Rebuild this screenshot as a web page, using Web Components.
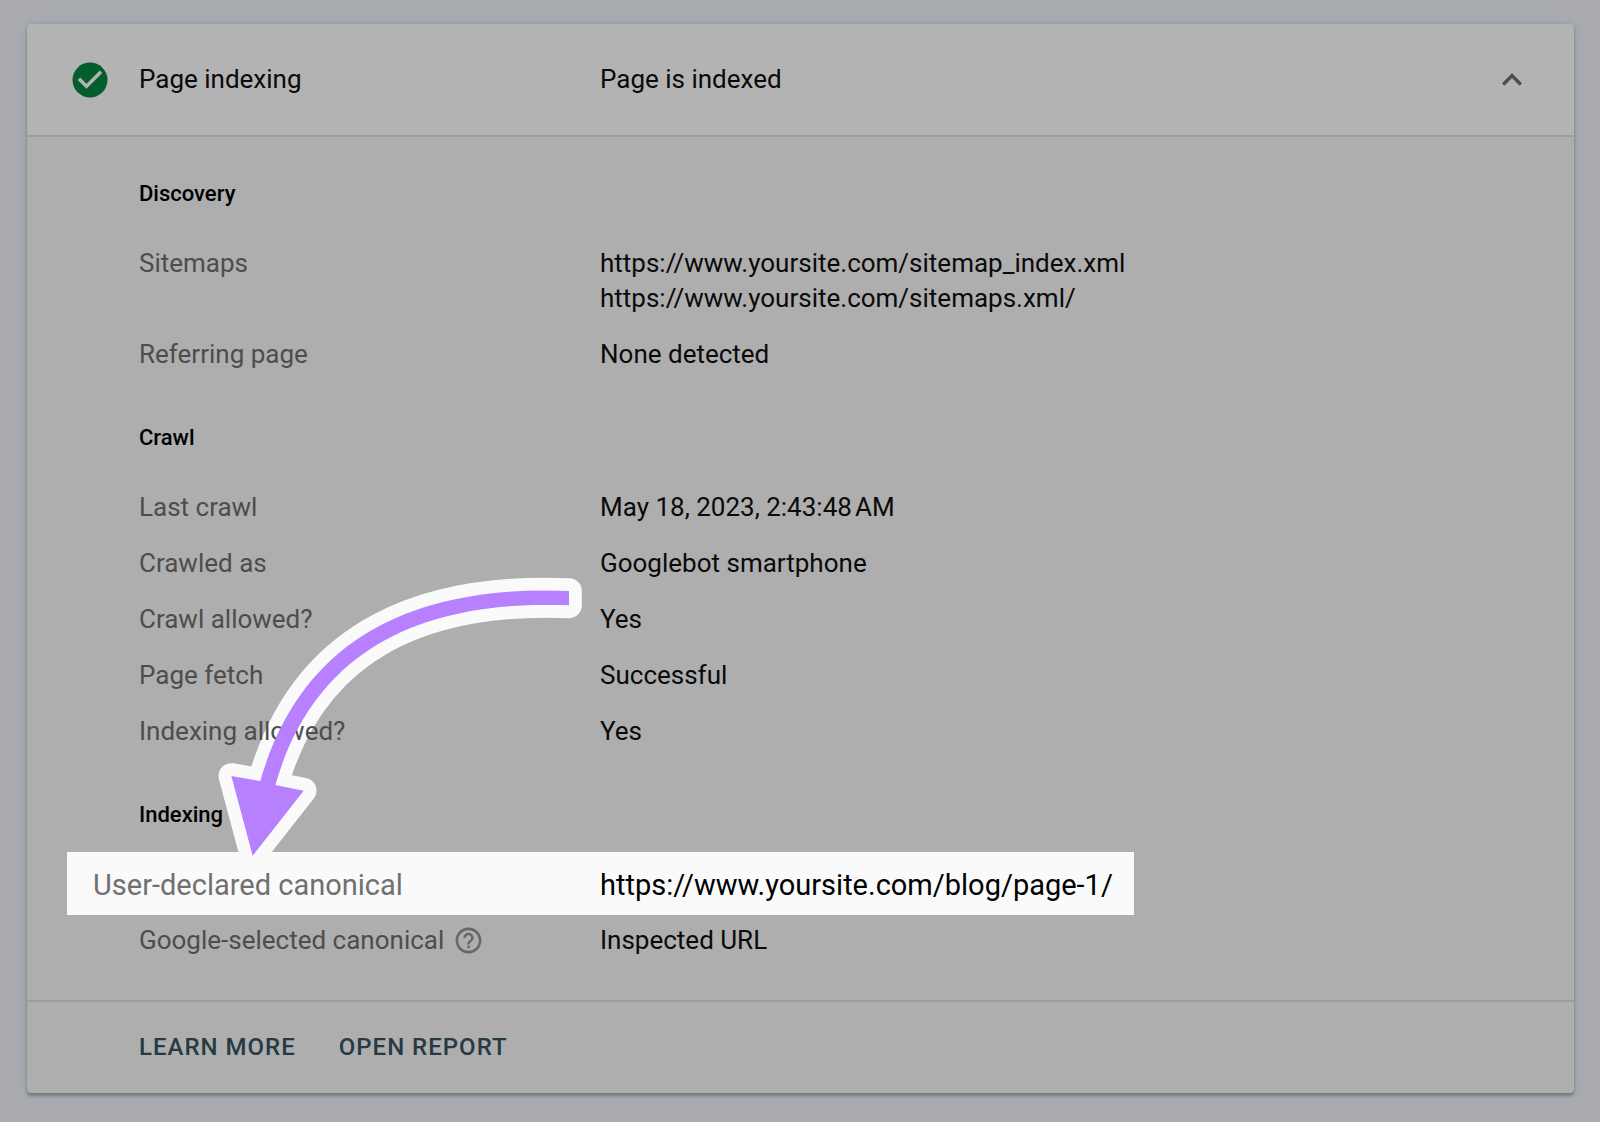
<!DOCTYPE html>
<html lang="en">
<head>
<meta charset="utf-8">
<title>Page indexing</title>
<style>
  body {
    margin: 0;
    padding: 24px 26px 28px 27px;
    background: #a9abb0;
    font-family: Roboto, "Liberation Sans", sans-serif;
    font-size: 26px;
    line-height: 35px;
    color: #0a0a0a;
  }
</style>
</head>
<body>
<index-card>
  <card-header slot="header">
    <span slot="title">Page indexing</span>
    <span slot="status">Page is indexed</span>
  </card-header>

  <detail-section>
    <span slot="heading">Discovery</span>
    <detail-row><span slot="label">Sitemaps</span>https://www.yoursite.com/sitemap_index.xml<br>https://www.yoursite.com/sitemaps.xml/</detail-row>
    <detail-row><span slot="label">Referring page</span>None detected</detail-row>
  </detail-section>

  <detail-section>
    <span slot="heading">Crawl</span>
    <detail-row><span slot="label">Last crawl</span>May 18, 2023, 2:43:48&#8239;AM</detail-row>
    <detail-row><span slot="label">Crawled as</span>Googlebot smartphone</detail-row>
    <detail-row><span slot="label">Crawl allowed?</span>Yes</detail-row>
    <detail-row><span slot="label">Page fetch</span>Successful</detail-row>
    <detail-row><span slot="label">Indexing allowed?</span>Yes</detail-row>
  </detail-section>

  <detail-section>
    <span slot="heading">Indexing</span>
    <detail-row highlight><span slot="label">User-declared canonical</span>https://www.yoursite.com/blog/page-1/</detail-row>
    <detail-row><span slot="label">Google-selected canonical</span><help-button slot="help"></help-button>Inspected URL</detail-row>
  </detail-section>

  <guide-arrow layer="halo"></guide-arrow>
  <guide-arrow layer="fill"></guide-arrow>

  <card-link slot="footer" href="#learn">LEARN MORE</card-link>
  <card-link slot="footer" href="#report">OPEN REPORT</card-link>
</index-card>

<script>
  function define(name, html, setup) {
    const template = document.createElement('template');
    template.innerHTML = html;
    customElements.define(name, class extends HTMLElement {
      constructor() {
        super();
        this.attachShadow({ mode: 'open' }).append(template.content.cloneNode(true));
      }
      connectedCallback() {
        if (setup) setup(this, this.shadowRoot);
      }
    });
  }

  define('index-card', `
    <style>
      :host {
        display: block;
        border-radius: 4px;
        background: #aeaeae;
        box-shadow: 0 3px 3px rgba(70, 72, 72, .45), 0 1px 12px rgba(140, 158, 165, .6), 0 0 2px rgba(90, 95, 98, .3);
      }
      main {
        position: relative;
        isolation: isolate;
        display: flex;
        flex-direction: column;
        gap: 53px;
        padding: 44px 26px 42px 112px;
      }
      footer {
        display: flex;
        gap: 43px;
        padding: 27px 26px 28px 112px;
        border-top: 2px solid #9d9d9d;
      }
    </style>
    <slot name="header"></slot>
    <main><slot></slot></main>
    <footer><slot name="footer"></slot></footer>
  `);

  define('card-header', `
    <style>
      :host {
        display: flex;
        align-items: center;
        height: 111px;
        padding: 0 42px 0 42px;
        background: #b3b3b3;
        border-bottom: 2px solid #9d9d9d;
        border-radius: 4px 4px 0 0;
      }
      .state { flex: none; width: 42px; height: 42px; margin-right: 28px; }
      h1 { flex: none; width: 461px; margin: 0; font: inherit; }
      p { flex: 1; margin: 0; }
      button {
        display: flex;
        padding: 0;
        border: 0;
        background: none;
        color: #4d4d4d;
      }
    </style>
    <svg class="state" viewBox="0 0 24 24" aria-hidden="true">
      <circle cx="12" cy="12" r="10" fill="#045d2d"/>
      <path d="M10 17l-5-5 1.41-1.41L10 14.17l7.59-7.59L19 8z" fill="#b3b3b3"/>
    </svg>
    <h1><slot name="title"></slot></h1>
    <p><slot name="status"></slot></p>
    <button type="button" aria-label="Collapse" aria-expanded="true">
      <svg width="40" height="40" viewBox="0 0 24 24" aria-hidden="true">
        <path d="M12 8l-6 6 1.41 1.41L12 10.83l4.59 4.58L18 14z" fill="currentColor"/>
      </svg>
    </button>
  `);

  define('detail-section', `
    <style>
      :host { display: flex; flex-direction: column; gap: 21px; }
      h2 {
        margin: 0 0 18px;
        font-size: 22px;
        font-weight: 500;
        line-height: 26px;
        color: #000;
      }
    </style>
    <h2><slot name="heading"></slot></h2>
    <slot></slot>
  `);

  define('detail-row', `
    <style>
      :host { display: block; }
      dl { display: flex; margin: 0; }
      dt {
        flex: none;
        display: flex;
        align-items: center;
        align-self: flex-start;
        gap: 9px;
        width: 461px;
        color: #4d4d4d;
      }
      dd { margin: 0; }
      :host([highlight]) {
        width: fit-content;
        margin: -15px 0 -13px -72px;
        padding: 16px 21px 12px 26px;
        background: #fafafa;
        font-size: 29px;
        color: #000;
      }
      :host([highlight]) dt { width: 507px; color: #707070; }
    </style>
    <dl>
      <dt><slot name="label"></slot><slot name="help"></slot></dt>
      <dd><slot></slot></dd>
    </dl>
  `);

  define('help-button', `
    <style>
      :host { display: flex; }
      button { display: flex; padding: 0; border: 0; background: none; color: #676767; }
    </style>
    <button type="button" aria-label="Help">
      <svg width="31" height="31" viewBox="0 0 24 24" aria-hidden="true">
        <path fill="currentColor" d="M11 18h2v-2h-2v2zm1-16C6.48 2 2 6.48 2 12s4.480 10 10 10 10-4.480 10-10S17.520 2 12 2zm0 18c-4.410 0-8-3.590-8-8s3.590-8 8-8 8 3.590 8 8-3.590 8-8 8zm0-14c-2.210 0-4 1.790-4 4h2c0-1.100.9-2 2-2s2 .9 2 2c0 2-3 1.750-3 5h2c0-2.250 3-2.500 3-5 0-2.210-1.790-4-4-4z"/>
      </svg>
    </button>
  `);

  define('card-link', `
    <style>
      :host { display: block; }
      a {
        color: #263a44;
        font-size: 24px;
        font-weight: 500;
        letter-spacing: 1px;
        text-decoration: none;
      }
    </style>
    <a><slot></slot></a>
  `, (host, root) => {
    root.querySelector('a').href = host.getAttribute('href');
  });

  /* The halo lies under the text of the rows, the coloured arrow over it. */
  define('guide-arrow', `
    <style>
      :host {
        position: absolute;
        left: 173px;
        bottom: 130px;
        pointer-events: none;
      }
      :host([layer="halo"]) { z-index: -1; }
      svg { display: block; overflow: visible; }
      path { fill: #b680ff; }
      :host([layer="halo"]) path {
        fill: #fafafa;
        stroke: #fafafa;
        stroke-width: 77;
        stroke-linejoin: round;
      }
    </style>
    <svg width="400" height="310" viewBox="0 0 1200 930" aria-hidden="true">
      <path d="M1107 93C695 76 314 197 181 663L94 648L158 887L311 692L226 675C346 260 676 119 1107 136z"/>
    </svg>
  `);
</script>
</body>
</html>
